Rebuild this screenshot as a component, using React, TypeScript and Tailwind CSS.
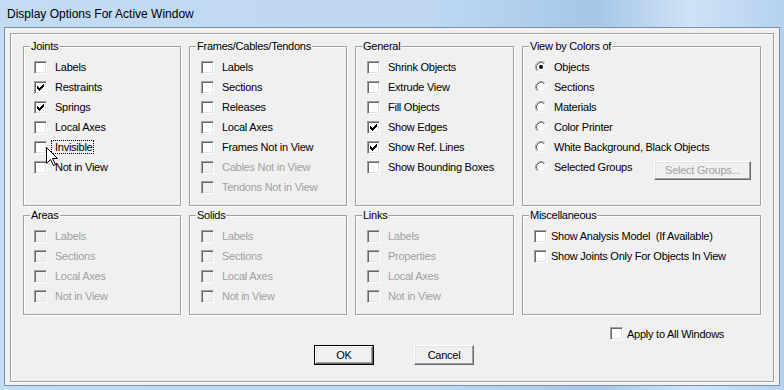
import React from "react";

// classic 3d checkbox, 13x13
function Box({ checked, disabled }: { checked?: boolean; disabled?: boolean }) {
  return (
    <span
      className={`w-[13px] h-[13px] shrink-0 flex border border-t-[#a0a0a0] border-l-[#a0a0a0] border-r-white border-b-white shadow-[inset_1px_1px_0_#696969,inset_-1px_-1px_0_#e3e3e3] ${
        disabled ? "bg-[#f0f0f0]" : "bg-white"
      }`}
    >
      {checked && (
        <svg width="11" height="11" viewBox="0 0 11 11" shapeRendering="crispEdges">
          <path
            d="M2 4h1v3h-1zM3 5h1v3h-1zM4 6h1v3h-1zM5 5h1v3h-1zM6 4h1v3h-1zM7 3h1v3h-1zM8 2h1v3h-1z"
            fill="#000"
          />
        </svg>
      )}
    </span>
  );
}

function Radio({ checked }: { checked?: boolean }) {
  return (
    <svg width="12" height="12" viewBox="0 0 12 12" className="shrink-0">
      <circle cx="6" cy="6" r="4.5" fill="#fff" />
      <path d="M2.11 9.89A5.5 5.5 0 0 1 9.89 2.11" fill="none" stroke="#a0a0a0" strokeWidth="1" />
      <path d="M2.82 9.18A4.5 4.5 0 0 1 9.18 2.82" fill="none" stroke="#696969" strokeWidth="1" />
      <path d="M9.89 2.11A5.5 5.5 0 0 1 2.11 9.89" fill="none" stroke="#ffffff" strokeWidth="1" />
      <path d="M9.18 2.82A4.5 4.5 0 0 1 2.82 9.18" fill="none" stroke="#e3e3e3" strokeWidth="1" />
      {checked && <circle cx="6" cy="6" r="2" fill="#000" />}
    </svg>
  );
}

interface CheckProps {
  label: string;
  checked?: boolean;
  disabled?: boolean;
  focus?: boolean;
  tight?: boolean;
}

function Check({ label, checked, disabled, focus, tight }: CheckProps) {
  return (
    <div className="flex items-center h-[20px]">
      <Box checked={checked} disabled={disabled} />
      <span
        className={`${tight ? "ml-0" : "ml-[4px]"} pl-[3px] leading-[12px] whitespace-pre border border-dotted ${
          focus ? "border-black" : "border-transparent"
        } ${disabled ? "text-[#a0a0a0]" : "text-black"}`}
      >
        {label}
      </span>
    </div>
  );
}

function Group({
  title,
  className,
  children,
}: {
  title: string;
  className: string;
  children: React.ReactNode;
}) {
  return (
    <div
      className={`relative border border-[#a0a0a0] shadow-[inset_1px_1px_0_#fff,1px_1px_0_#fff] pt-[10px] ${className}`}
    >
      <span className="absolute -top-[7px] left-[6px] px-[1px] leading-[13px] bg-[#f0f0f0] whitespace-nowrap">
        {title}
      </span>
      {children}
    </div>
  );
}

function Button({ label, isDefault, disabled, className }: { label: string; isDefault?: boolean; disabled?: boolean; className: string }) {
  const inner = (
    <div
      className={`flex-1 flex items-center justify-center border border-t-white border-l-white border-r-[#696969] border-b-[#696969] shadow-[inset_-1px_-1px_0_#a0a0a0,inset_1px_1px_0_#e3e3e3] bg-[#f0f0f0] ${
        disabled ? "text-[#a0a0a0]" : "text-black"
      }`}
    >
      {label}
    </div>
  );
  return (
    <div className={`flex ${isDefault ? "border border-black" : ""} ${className}`}>{inner}</div>
  );
}

const joints = [
  { label: "Labels" },
  { label: "Restraints", checked: true },
  { label: "Springs", checked: true },
  { label: "Local Axes" },
  { label: "Invisible", focus: true },
  { label: "Not in View" },
];

const frames = [
  { label: "Labels" },
  { label: "Sections" },
  { label: "Releases" },
  { label: "Local Axes" },
  { label: "Frames Not in View" },
  { label: "Cables Not in View", disabled: true },
  { label: "Tendons Not in View", disabled: true },
];

const general = [
  { label: "Shrink Objects" },
  { label: "Extrude View" },
  { label: "Fill Objects" },
  { label: "Show Edges", checked: true },
  { label: "Show Ref. Lines", checked: true },
  { label: "Show Bounding Boxes" },
];

const colors = ["Objects", "Sections", "Materials", "Color Printer", "White Background, Black Objects"];

export default function App() {
  return (
    <div className="relative w-[784px] h-[390px] overflow-hidden flex flex-col bg-[linear-gradient(90deg,#c3dbf3_0%,#bed8f2_55%,#a6c6e8_76%,#cfe3f7_88%,#b4d1ef_100%)] font-['Liberation_Sans',Arial,sans-serif] text-[11px] tracking-[-0.25px] text-black">
      {/* title bar */}
      <div className="h-[27px] shrink-0 flex items-center pl-[7px] text-[12px] tracking-normal">
        Display Options For Active Window
      </div>

      {/* client area */}
      <div className="mx-[4px] h-[359px] shrink-0 border border-[#7d91a8] bg-[#f0f0f0]">
        <div className="ml-[5px] mt-[5px] w-[764px] h-[349px] border border-[#a0a0a0] shadow-[inset_1px_1px_0_#fff,1px_1px_0_#fff] pl-[12px] pt-[12px]">
          <div className="grid grid-cols-[158px_158px_159px_239px] grid-rows-[160px_100px] gap-x-[8px] gap-y-[9px]">
            <Group title="Joints" className="pl-[10px]">
              {joints.map((j) => (
                <Check key={j.label} {...j} />
              ))}
            </Group>
            <Group title="Frames/Cables/Tendons" className="pl-[11px]">
              {frames.map((j) => (
                <Check key={j.label} {...j} />
              ))}
            </Group>
            <Group title="General" className="pl-[11px]">
              {general.map((j) => (
                <Check key={j.label} {...j} />
              ))}
            </Group>
            <Group title="View by Colors of" className="pl-[12px] pr-[9px]">
              {colors.map((c, i) => (
                <div key={c} className="flex items-center h-[20px]">
                  <Radio checked={i === 0} />
                  <span className="ml-[3px] pl-[4px] leading-[12px] whitespace-nowrap">{c}</span>
                </div>
              ))}
              <div className="flex h-[20px]">
                <div className="flex items-center h-[20px]">
                  <Radio />
                  <span className="ml-[3px] pl-[4px] leading-[12px] whitespace-nowrap">Selected Groups</span>
                </div>
                <Button label="Select Groups..." disabled className="ml-auto mt-[4px] w-[97px] h-[19px] shrink-0" />
              </div>
            </Group>

            <Group title="Areas" className="pl-[10px]">
              {["Labels", "Sections", "Local Axes", "Not in View"].map((l) => (
                <Check key={l} label={l} disabled />
              ))}
            </Group>
            <Group title="Solids" className="pl-[11px]">
              {["Labels", "Sections", "Local Axes", "Not in View"].map((l) => (
                <Check key={l} label={l} disabled />
              ))}
            </Group>
            <Group title="Links" className="pl-[11px]">
              {["Labels", "Properties", "Local Axes", "Not in View"].map((l) => (
                <Check key={l} label={l} disabled />
              ))}
            </Group>
            <Group title="Miscellaneous" className="pl-[11px]">
              <Check label="Show Analysis Model  (If Available)" tight />
              <Check label="Show Joints Only For Objects In View" tight />
            </Group>
          </div>

          {/* apply row */}
          <div className="mt-[12px] ml-[587px] flex items-center h-[13px]">
            <Box />
            <span className="ml-0 pl-[4px] leading-[12px] whitespace-nowrap">Apply to All Windows</span>
          </div>

          {/* buttons */}
          <div className="mt-[5px] ml-[291px] flex gap-[40px]">
            <Button label="OK" isDefault className="w-[60px] h-[20px]" />
            <Button label="Cancel" className="w-[60px] h-[20px]" />
          </div>
        </div>
      </div>

      {/* mouse pointer over "Invisible" */}
      <svg
        className="absolute left-[46px] top-[147px]"
        width="13"
        height="20"
        viewBox="0 0 13 20"
      >
        <path
          d="M0.5 0.5L0.5 16.5L4.5 12.5L7.5 18.5L9.5 17.5L6.5 11.5L11.5 11.5Z"
          fill="#fff"
          stroke="#000"
          strokeWidth="1"
          strokeLinejoin="miter"
        />
      </svg>
    </div>
  );
}
